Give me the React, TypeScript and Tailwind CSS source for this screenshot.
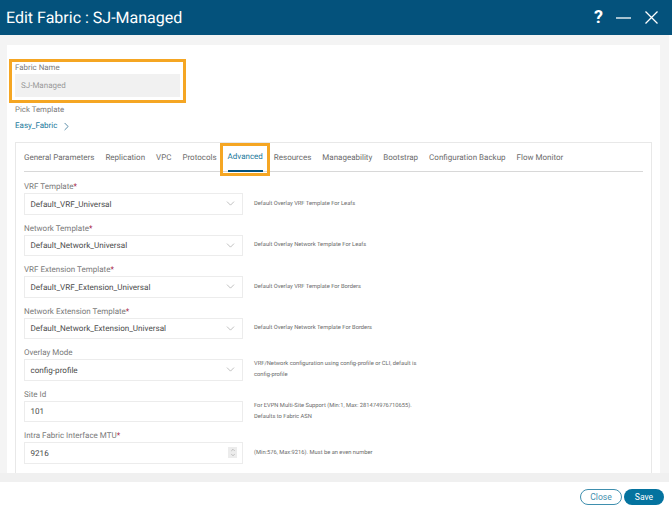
import { ChevronDown, ChevronRight } from 'lucide-react';

const tabs = ['General Parameters', 'Replication', 'VPC', 'Protocols', 'Advanced', 'Resources', 'Manageability', 'Bootstrap', 'Configuration Backup', 'Flow Monitor'];

const fields = [
  { label: 'VRF Template', required: true, value: 'Default_VRF_Universal', kind: 'select', help: ['Default Overlay VRF Template For Leafs'] },
  { label: 'Network Template', required: true, value: 'Default_Network_Universal', kind: 'select', help: ['Default Overlay Network Template For Leafs'] },
  { label: 'VRF Extension Template', required: true, value: 'Default_VRF_Extension_Universal', kind: 'select', help: ['Default Overlay VRF Template For Borders'] },
  { label: 'Network Extension Template', required: true, value: 'Default_Network_Extension_Universal', kind: 'select', help: ['Default Overlay Network Template For Borders'] },
  { label: 'Overlay Mode', required: false, value: 'config-profile', kind: 'select', help: ['VRF/Network configuration using config-profile or CLI, default is', 'config-profile'] },
  { label: 'Site Id', required: false, value: '101', kind: 'text', help: ['For EVPN Multi-Site Support (Min:1, Max: 281474976710655).', 'Defaults to Fabric ASN'] },
  { label: 'Intra Fabric Interface MTU', required: true, value: '9216', kind: 'number', help: ['(Min:576, Max:9216). Must be an even number'] },
];

function Field({ field }: { field: (typeof fields)[number] }) {
  return (
    <div className="flex flex-col h-[41.5px]">
      <div className="h-[12px] leading-[12px] text-[8px] text-[#7a7a7a]">
        {field.label}
        {field.required && <span className="text-[#a3123a]">*</span>}
      </div>
      <div className="flex items-center">
        <div className="w-[219px] h-[21.5px] border border-[#ececec] flex items-center justify-between pl-[5.5px] pr-[2px] text-[8.1px] text-[#4b4b4b] bg-white">
          <span>{field.value}</span>
          {field.kind === 'select' && <ChevronDown size={13} strokeWidth={1} className="text-[#8a8a8a] mr-[3px]" />}
          {field.kind === 'number' && (
            <span className="flex flex-col items-center justify-center w-[9px] h-[11px] bg-[#ececec] mr-[3px] text-[#777]">
              <ChevronDown size={6} strokeWidth={1.5} className="rotate-180 -mb-[1px]" />
              <ChevronDown size={6} strokeWidth={1.5} />
            </span>
          )}
        </div>
        <div className="ml-[11px] flex flex-col gap-[5px] text-[5.75px] leading-[6px] text-[#6a6a6a]">
          {field.help.map((line) => (
            <span key={line}>{line}</span>
          ))}
        </div>
      </div>
    </div>
  );
}

export default function App() {
  return (
    <div className="w-[672px] h-[510px] overflow-hidden flex flex-col bg-white font-['Roboto',sans-serif] [text-rendering:geometricPrecision]">
      <header className="h-[35px] shrink-0 bg-[#04527c] text-white flex items-center justify-between pl-[6px] pr-[14px]">
        <h1 className="text-[16px]">Edit Fabric : SJ-Managed</h1>
        <div className="flex items-center gap-[13px]">
          <span className="text-[18px] leading-none font-bold">?</span>
          <svg width="16" height="2" viewBox="0 0 16 2"><path d="M0 1h15" stroke="white" strokeWidth="1.3" /></svg>
          <svg width="13" height="13" viewBox="0 0 13 13"><path d="M.5.5l12 12M12.5.5l-12 12" stroke="white" strokeWidth="1.3" /></svg>
        </div>
      </header>

      <div className="h-[438px] shrink-0 bg-[#f4f4f4] pt-[10px] pl-[7px] pr-[9px] mr-[3px]">
        <section className="relative h-[428px] bg-white px-[8px] pt-[14px] flex flex-col">
          <div className="absolute left-[2px] top-[14px] w-[177px] h-[44px] border-[3px] border-[#f5a623]" />
          <label className="h-[15px] leading-[18px] text-[7.9px] text-[#7a7a7a]">Fabric Name</label>
          <div className="w-[165px] h-[23px] bg-[#f1f1f1] flex items-center pl-[6px] text-[8px] text-[#9a9a9a]">SJ-Managed</div>
          <label className="mt-[7px] h-[12px] leading-[12px] text-[7.8px] text-[#7a7a7a]">Pick Template</label>
          <div className="mt-[4px] h-[12px] flex items-center gap-[3px] text-[8px] text-[#1d7a9c]">
            Easy_Fabric <ChevronRight size={13} strokeWidth={1.2} className="text-[#04527c]" />
          </div>

          <div className="mt-[10px] flex-1 border border-b-0 border-[#e8e8e8] px-[8px] relative">
            <div className="absolute left-[204px] top-0 w-[50px] h-[33px] border-[3px] border-[#f5a623]" />
            <nav className="h-[29px] border-b border-[#d8d8d8] flex gap-[11px] text-[8px] text-[#6b6b6b]">
              {tabs.map((tab) => (
                <div
                  key={tab}
                  className={
                    tab === 'Advanced'
                      ? 'h-[29px] flex items-center border-b-2 border-[#04527c] text-[#1d7a9c]'
                      : 'h-[29px] flex items-center'
                  }
                >
                  {tab}
                </div>
              ))}
            </nav>
            <div className="pt-[9px] flex flex-col">
              {fields.map((field) => (
                <Field key={field.label} field={field} />
              ))}
            </div>
          </div>
        </section>
      </div>

      <div className="h-[9px] shrink-0 bg-[#f0f0f0] mr-[3px]" />

      <footer className="flex-1 flex items-start justify-end gap-[2px] pt-[7px] pr-[8px]">
        <button className="w-[42px] h-[16px] rounded-full border border-[#3f8fae] text-[#3f8fae] text-[8.6px] leading-none">Close</button>
        <button className="w-[40px] h-[16px] rounded-full bg-[#04739f] text-white text-[8.6px] leading-none">Save</button>
      </footer>
    </div>
  );
}
